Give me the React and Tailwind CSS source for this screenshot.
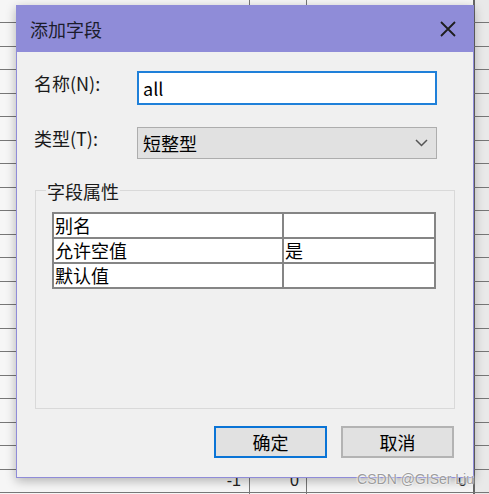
import { useState } from "react";

const rows = Array.from({ length: 22 }, (_, i) => i);

const Sheet = () => {
    return (
        <div className="flex flex-col -mt-[0.5px]">
            {rows.map((r) => (
                <div key={r} className="flex h-[23.5px] border-b border-[#777777] shrink-0">
                    <div className="w-[250px] border-r border-[#777777] bg-[#f6f6f6] flex items-center justify-end pr-[8px] text-[16px] text-[#222] font-['Liberation_Sans',sans-serif]">
                        {r === 20 ? "-1" : ""}
                    </div>
                    <div className="w-[57px] border-r border-[#777777] bg-[#f6f6f6] flex items-center justify-end pr-[7px] text-[16px] text-[#222] font-['Liberation_Sans',sans-serif]">
                        {r === 20 ? "0" : ""}
                    </div>
                    <div className="w-[168px] border-r-2 border-[#666666] bg-[#f6f6f6] flex items-center justify-end pr-[6px] text-[16px] text-[#222] font-['Liberation_Sans',sans-serif]">
                        {r === 20 ? "0" : ""}
                    </div>
                    <div className="flex-1 bg-[#e9e9e9]"></div>
                </div>
            ))}
        </div>
    );
};

const Dialog = () => {
    const [name, setName] = useState("all");

    return (
        <div className="absolute left-[16px] top-[5px] w-[458px] h-[473px] border border-[#8f8cd8] bg-[#f0f0f0] flex flex-col shadow-[0_3px_10px_rgba(0,0,0,0.28)]">
            <div id="title-bar" className="h-[46px] shrink-0 bg-[#8f8cd8] flex items-center justify-between pl-[13px] pr-[17px]">
                <span className="text-[18px] leading-[24px] text-[#1c1c2c]">添加字段</span>
                <svg width="16" height="16" viewBox="0 0 16 16">
                    <path d="M1 1 L15 15 M15 1 L1 15" stroke="#1e1e1e" strokeWidth="1.8" fill="none" />
                </svg>
            </div>

            <div id="body" className="flex flex-col">
                <div className="flex items-start mt-[19px] pl-[17px]">
                    <span className="w-[103px] text-[18px] leading-[24px] text-[#1a1a1a]">名称(N):</span>
                    <input
                        value={name}
                        onChange={(e) => setName(e.target.value)}
                        className="w-[300px] h-[34px] bg-white border-2 border-[#1f80d9] px-[4px] text-[18px] text-black outline-none"
                    />
                </div>

                <div className="flex items-start mt-[22px] pl-[17px]">
                    <span className="w-[103px] text-[18px] leading-[24px] -mt-[1px] text-[#1a1a1a]">类型(T):</span>
                    <div className="w-[300px] h-[32px] bg-[#e1e1e1] border border-[#adadad] flex items-center justify-between pl-[5px] pr-[8px]">
                        <span className="text-[18px] leading-[24px] text-black">短整型</span>
                        <svg width="13" height="8" viewBox="0 0 13 8">
                            <path d="M1 1 L6.5 6.5 L12 1" stroke="#555" strokeWidth="1.5" fill="none" />
                        </svg>
                    </div>
                </div>

                <div id="group" className="mt-[31px] ml-[18px] w-[420px] h-[219px] border border-[#d9d9d9] flex flex-col">
                    <div className="-mt-[12px] ml-[10px] w-fit px-[1px] bg-[#f0f0f0] text-[18px] leading-[24px] text-[#1a1a1a]">字段属性</div>
                    <table className="mt-[9px] ml-[16px] w-[384px] border-collapse text-[18px] text-black">
                        <tbody>
                            <tr className="h-[25px]">
                                <td className="w-[230px] border-2 border-[#858585] bg-white p-0 pl-[1px] leading-[21px]">别名</td>
                                <td className="border-2 border-[#858585] bg-white p-0 pl-[1px] leading-[21px]"></td>
                            </tr>
                            <tr className="h-[25px]">
                                <td className="w-[230px] border-2 border-[#858585] bg-white p-0 pl-[1px] leading-[21px]">允许空值</td>
                                <td className="border-2 border-[#858585] bg-white p-0 pl-[1px] leading-[21px]">是</td>
                            </tr>
                            <tr className="h-[25px]">
                                <td className="w-[230px] border-2 border-[#858585] bg-white p-0 pl-[1px] leading-[21px]">默认值</td>
                                <td className="border-2 border-[#858585] bg-white p-0 pl-[1px] leading-[21px]"></td>
                            </tr>
                        </tbody>
                    </table>
                </div>

                <div className="flex justify-end gap-[14px] mt-[17px] pr-[19px]">
                    <button className="w-[113px] h-[32px] bg-[#e1e1e1] border-2 border-[#0a74d6] text-[18px] leading-[24px] text-black">确定</button>
                    <button className="w-[113px] h-[32px] bg-[#e1e1e1] border-2 border-[#b3b3b3] text-[18px] leading-[24px] text-black">取消</button>
                </div>
            </div>
        </div>
    );
};

const App = () => {
    return (
        <div className="relative w-[489px] h-[494px] overflow-hidden bg-[#f6f6f6] font-['Noto_Sans_CJK_SC',sans-serif]">
            <Sheet />
            <Dialog />
            <div className="absolute right-[15px] bottom-[7px] text-[14px] leading-[16px] text-[#9c9c9c] font-['Liberation_Sans',sans-serif] [text-shadow:0_0_2px_#fff,0_0_2px_#fff]">
                CSDN @GISer Liu
            </div>
        </div>
    );
};

export default App;
